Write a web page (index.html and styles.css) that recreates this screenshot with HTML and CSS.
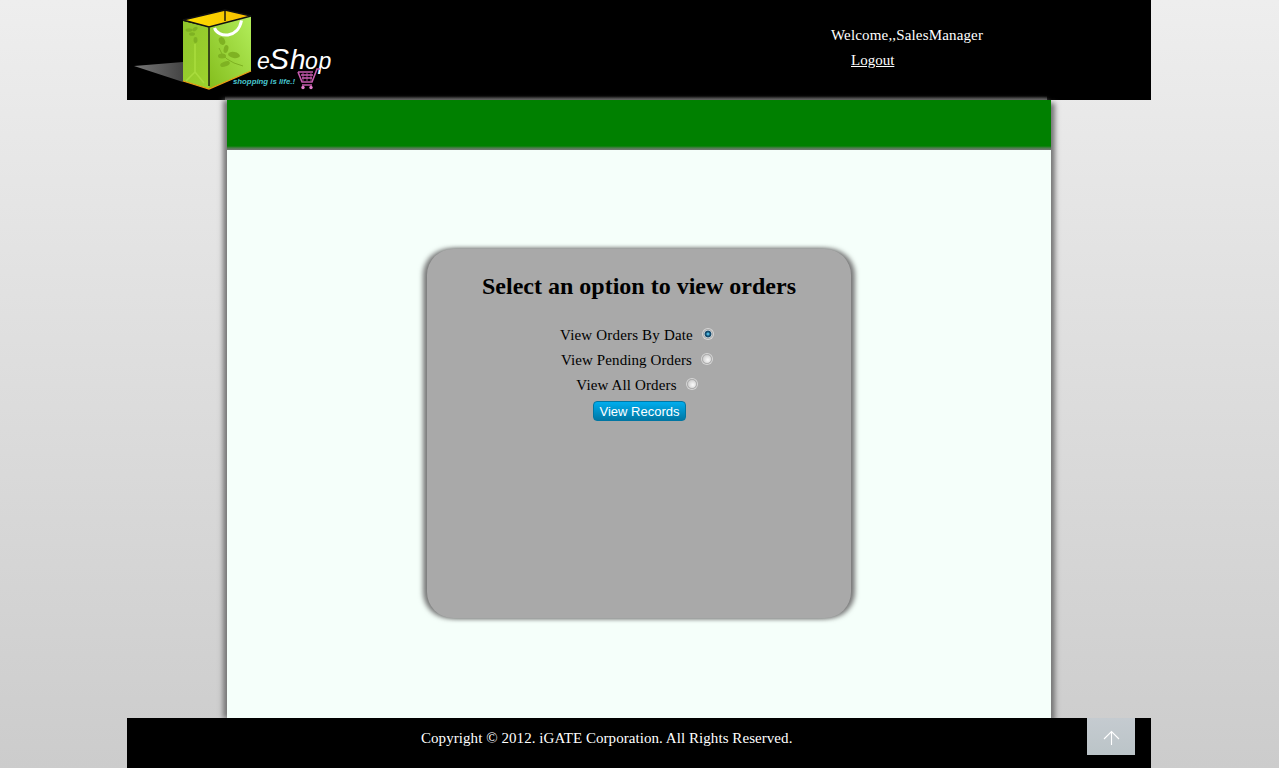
FILE: index.html
```html
<!DOCTYPE html>
<html lang="en">
<head>
<meta charset="utf-8">
<title>eShop</title>
<link rel="stylesheet" href="styles.css">
</head>
<body>
<div class="page">
  <header class="header">
    <svg class="logo" width="220" height="100" viewBox="0 0 220 100" role="img" aria-label="eShop">
      <defs>
        <linearGradient id="side" x1="0" y1="0" x2="1" y2="1"><stop offset="0" stop-color="#8fc52c"/><stop offset="1" stop-color="#9dd32d"/></linearGradient>
        <linearGradient id="front" x1="0" y1="1" x2="1" y2="0"><stop offset="0" stop-color="#84bd1c"/><stop offset="1" stop-color="#b3ee5b"/></linearGradient>
        <linearGradient id="inner" x1="0" y1="0" x2="1" y2="0"><stop offset="0" stop-color="#ffe000"/><stop offset="1" stop-color="#f8bd00"/></linearGradient>
        <linearGradient id="shade" x1="0" y1="0" x2="1" y2="0"><stop offset="0" stop-color="#777"/><stop offset="1" stop-color="#444"/></linearGradient>
      </defs>
      <path d="M7 66L56 62V82Z" fill="url(#shade)"/>
      <path d="M56 20L98 10L124 16L82 27Z" fill="url(#inner)"/>
      <path d="M56 21L82 27V89L56 81Z" fill="url(#side)"/>
      <path d="M82 27L124 16V71L82 89Z" fill="url(#front)"/>
      <path d="M56 81L82 89L124 71" fill="none" stroke="#ef9b13" stroke-width="1.3"/>
      <path d="M56 20L98 10L124 16L82 27ZM98 10V21M82 27V86" fill="none" stroke="#111" stroke-width="1.4"/>
      <path d="M68 44V72L59 81M68 72L77 83" fill="none" stroke="#a9dc3d" stroke-width="1.6"/>
      <g fill="#7fb222">
        <ellipse cx="62" cy="30" rx="3.5" ry="1.8"/><ellipse cx="68" cy="29" rx="3" ry="1.7" transform="rotate(-35 68 29)"/><ellipse cx="65" cy="34" rx="3" ry="1.8"/><ellipse cx="68.500" cy="40" rx="2" ry="3"/>
        <ellipse cx="95" cy="41" rx="3" ry="4" transform="rotate(-25 95 41)"/><ellipse cx="99" cy="49" rx="2.300" ry="4" transform="rotate(15 99 49)"/><ellipse cx="95" cy="56" rx="4" ry="2.500"/><ellipse cx="107" cy="55" rx="6" ry="3" transform="rotate(10 107 55)"/><ellipse cx="98" cy="64" rx="5" ry="2.500" transform="rotate(-20 98 64)"/>
      </g>
      <path d="M92 48Q96 61 116 66" fill="none" stroke="#7fb222"/>
      <path d="M87.500 28C91 38 111 39 114.500 20.500" fill="none" stroke="#fff" stroke-width="3"/>
      <text class="logo-name" y="69"><tspan x="130" class="logo-small">e</tspan><tspan x="142" class="logo-cap">S</tspan><tspan x="163">h</tspan><tspan x="178" class="logo-small">o</tspan><tspan x="191.500" class="logo-small">p</tspan></text>
      <text class="logo-tag" x="106" y="84" textLength="62" lengthAdjust="spacingAndGlyphs">shopping is life.!</text>
      <path d="M171 72H186M171 72L175 82H185L190 69H193M174 75H186M175 78H185M175 85H185" fill="none" stroke="#c65bae" stroke-width="1.600"/>
      <path d="M176 73V81M180 73V81M184 73V81" fill="none" stroke="#c65bae" stroke-width=".8"/>
      <circle cx="176" cy="87.500" r="1.700" fill="#e47dcc"/><circle cx="184" cy="87.500" r="1.700" fill="#e47dcc"/>
    </svg>
    <div class="account">
      <span class="welcome">Welcome,,SalesManager</span>
      <a class="logout" href="#">Logout</a>
    </div>
  </header>
  <main class="content">
    <div class="menu-bar"></div>
    <form class="panel">
      <h2 class="title">Select an option to view orders</h2>
      <label class="option by-date">View Orders By Date<input class="radio" type="radio" name="view" checked></label>
      <label class="option">View Pending Orders<input class="radio" type="radio" name="view"></label>
      <label class="option all">View All Orders<input class="radio" type="radio" name="view"></label>
      <button class="submit" type="button">View Records</button>
    </form>
  </main>
  <footer class="footer">
    <span class="copyright">Copyright © 2012. iGATE Corporation. All Rights Reserved.</span>
    <a class="to-top" href="#" aria-label="Back to top"><svg width="48" height="37" viewBox="0 0 48 37"><path d="M24.500 27V13.500M17 21L24.500 13.500L32 21" fill="none" stroke="#fff" stroke-width="1.100"/></svg></a>
  </footer>
</div>
</body>
</html>
```
FILE: styles.css
```css
html { height: 769px; background: #fff; }
body {
  margin: 0;
  height: 768px;
  background: linear-gradient(#eee, #ccc);
  font: 15px "Liberation Serif", "Times New Roman", serif;
  color: #000;
}
.page { width: 1024px; margin: 0 auto 0 127px; }
.header { display: flex; height: 100px; background: #000; color: #fff; }
.logo { flex: none; }
.logo-name { font: italic 28px "Liberation Sans", sans-serif; fill: #fff; }
.logo-small { font-size: 23px; }
.logo-cap { font-size: 30px; }
.logo-tag { font: italic bold 8px "Liberation Sans", sans-serif; fill: #48c5cf; }
.account { display: flex; flex-direction: column; align-items: flex-start; margin-left: 484px; padding-top: 23px; line-height: 25px; }
.welcome { letter-spacing: .16px; }
.logout { margin-left: 20px; color: #fff; }
.content {
  position: relative;
  width: 824px;
  height: 618px;
  margin: 0 auto;
  background: #f5fffa;
  box-shadow: -4px 0 5px #777, 4px 3px 5px #777;
}
/* soft edge cast upward over the header */
.content::before {
  content: "";
  position: absolute;
  left: -2px;
  top: -4px;
  width: 822px;
  height: 4px;
  background: linear-gradient(transparent, #666);
}
.menu-bar { height: 50px; background: linear-gradient(#008000 46px, #287d28 47px, #4d7d4d 48px, #777 50px); }
.panel {
  display: flex;
  flex-direction: column;
  align-items: center;
  box-sizing: border-box;
  width: 424px;
  height: 369px;
  margin: 99px auto 0;
  padding-top: 23px;
  background: #a9a9a9;
  border-radius: 26px;
  box-shadow: -4px 0 5px #777, 4px 0 5px #777;
}
.title { margin: 0 0 23px; font-size: 24px; line-height: 28px; white-space: nowrap; }
.option { display: flex; align-items: center; height: 25px; letter-spacing: .1px; white-space: nowrap; }
.by-date { letter-spacing: .18px; }
.all { letter-spacing: .14px; }
.radio {
  appearance: none;
  width: 10px;
  height: 10px;
  margin: -3px 5px 0 10px;
  border: 1px solid #b0b0b0;
  border-radius: 50%;
  background: radial-gradient(circle at 60% 60%, #fafafa, #cfcfcf 75%);
  box-shadow: 0 0 0 1px #d6d6d6;
}
.radio:checked { background: radial-gradient(circle at 50% 50%, #4db4dc 0 1px, #164c6e 2px 3px, #f4f4f4 4px); }
.submit {
  width: 93px;
  height: 20px;
  margin-top: 3px;
  padding: 0 0 0 1px;
  border: 1px solid #0076a3;
  border-radius: 4px;
  background: linear-gradient(#00adee, #0078a5);
  color: #fff;
  font: 13px "Liberation Sans", Arial, sans-serif;
}
.footer { position: relative; display: flex; justify-content: space-between; height: 50px; background: #000; color: #fff; }
.copyright { margin-left: 294px; line-height: 41px; letter-spacing: .06px; }
.to-top { width: 48px; height: 37px; margin-right: 16px; background: linear-gradient(#c5cbd0, #bbc4c8); }
.to-top svg { display: block; }
```
